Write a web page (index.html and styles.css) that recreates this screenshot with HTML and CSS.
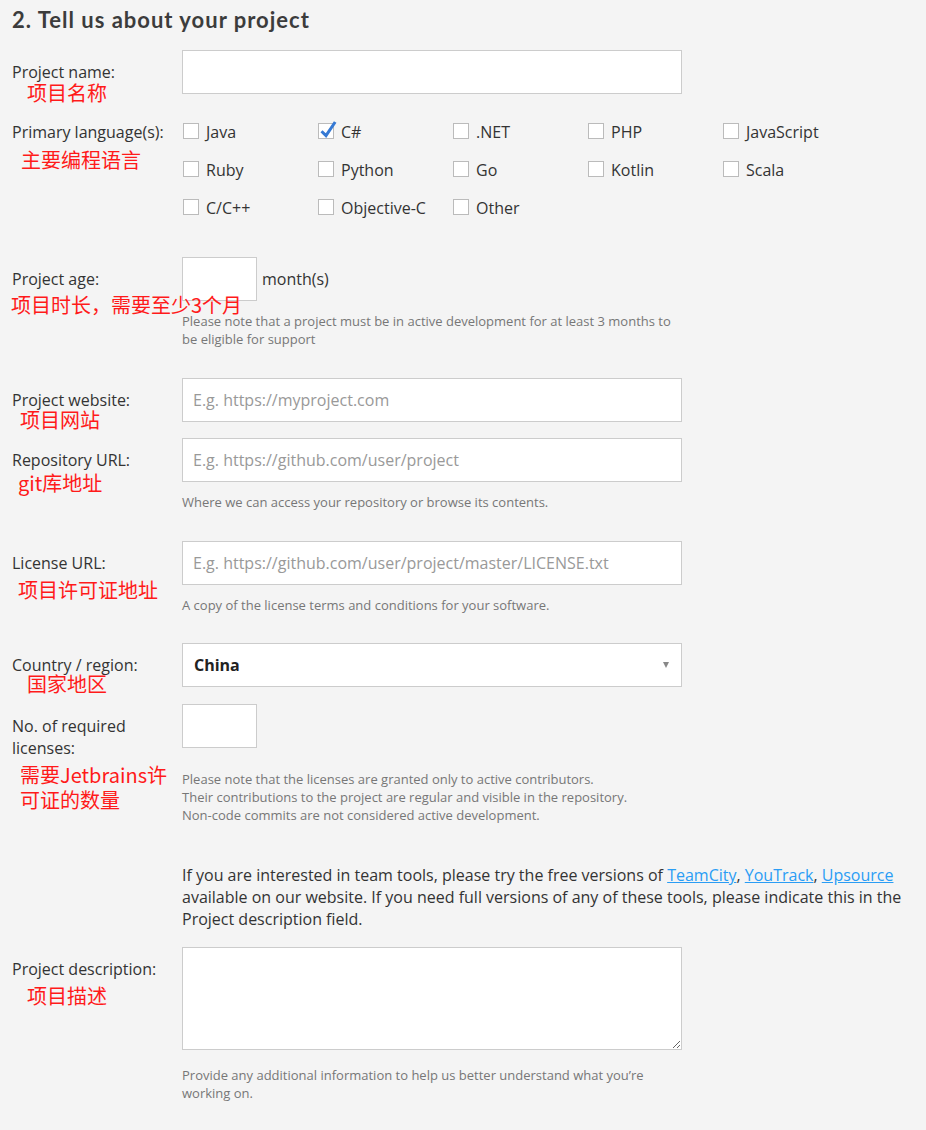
FILE: index.html
```html
<!DOCTYPE html>
<html lang="en">
<head>
  <meta charset="UTF-8">
  <meta name="viewport" content="width=device-width, initial-scale=1.0">
  <title>Tell us about your project</title>
  <link rel="stylesheet" href="styles.css">
</head>
<body>
  <form class="form">
    <h2 class="form-title">2. Tell us about your project</h2>

    <!-- Nombre -->
    <div class="row">
      <div class="label">Project name:<span class="cn cn-name">项目名称</span></div>
      <div class="field"><input class="text-input" type="text"></div>
    </div>

    <!-- Lenguajes -->
    <div class="row">
      <div class="label">Primary language(s):<span class="cn cn-lang">主要编程语言</span></div>
      <div class="field langs">
        <label class="check"><span class="box"></span>Java</label>
        <label class="check"><span class="box checked"><svg class="tick" width="20" height="18" viewBox="0 0 20 18"><path d="M3.5 11.2 L8 15.6 L17.2 2" fill="none" stroke="#3579d4" stroke-width="3"/></svg></span>C#</label>
        <label class="check"><span class="box"></span>.NET</label>
        <label class="check"><span class="box"></span>PHP</label>
        <label class="check"><span class="box"></span>JavaScript</label>
        <label class="check"><span class="box"></span>Ruby</label>
        <label class="check"><span class="box"></span>Python</label>
        <label class="check"><span class="box"></span>Go</label>
        <label class="check"><span class="box"></span>Kotlin</label>
        <label class="check"><span class="box"></span>Scala</label>
        <label class="check"><span class="box"></span>C/C++</label>
        <label class="check"><span class="box"></span>Objective-C</label>
        <label class="check"><span class="box"></span>Other</label>
      </div>
    </div>

    <!-- Edad -->
    <div class="row row-lg">
      <div class="label">Project age:<span class="cn cn-age">项目时长，需要至少3个月</span></div>
      <div class="field">
        <div class="inline-field"><input class="text-input small" type="text"><span>month(s)</span></div>
        <p class="hint">Please note that a project must be in active development for at least 3 months to be eligible for support</p>
      </div>
    </div>

    <!-- Web -->
    <div class="row row-md">
      <div class="label">Project website:<span class="cn cn-web">项目网站</span></div>
      <div class="field"><input class="text-input" type="text" placeholder="E.g. https://myproject.com"></div>
    </div>

    <div class="row">
      <div class="label">Repository URL:<span class="cn cn-repo">git库地址</span></div>
      <div class="field">
        <input class="text-input" type="text" placeholder="E.g. https://github.com/user/project">
        <p class="hint">Where we can access your repository or browse its contents.</p>
      </div>
    </div>

    <div class="row row-md">
      <div class="label">License URL:<span class="cn cn-license">项目许可证地址</span></div>
      <div class="field">
        <input class="text-input" type="text" placeholder="E.g. https://github.com/user/project/master/LICENSE.txt">
        <p class="hint">A copy of the license terms and conditions for your software.</p>
      </div>
    </div>

    <div class="row row-md row-country">
      <div class="label">Country / region:<span class="cn cn-country">国家地区</span></div>
      <div class="field">
        <div class="select"><span>China</span><span class="arrow"></span></div>
      </div>
    </div>

    <div class="row row-sm">
      <div class="label">No. of required licenses:<span class="cn cn-count">需要Jetbrains许<br>可证的数量</span></div>
      <div class="field">
        <input class="text-input small" type="text">
        <p class="hint hint-count">Please note that the licenses are granted only to active contributors.<br>Their contributions to the project are regular and visible in the repository.<br>Non-code commits are not considered active development.</p>
      </div>
    </div>

    <div class="row row-info">
      <div class="label"></div>
      <div class="field info">If you are interested in team tools, please try the free versions of <a href="#">TeamCity</a>, <a href="#">YouTrack</a>, <a href="#">Upsource</a> available on our website. If you need full versions of any of these tools, please indicate this in the Project description field.</div>
    </div>

    <div class="row row-sm">
      <div class="label">Project description:<span class="cn cn-desc">项目描述</span></div>
      <div class="field">
        <textarea class="textarea"></textarea>
        <p class="hint hint-desc">Provide any additional information to help us better understand what you’re working on.</p>
      </div>
    </div>
  </form>
</body>
</html>
```

FILE: styles.css
```css
body {
  margin: 0;
  padding: 0 12px;
  background-color: #f4f4f4;
  font-family: "Open Sans", Arial, sans-serif;
  color: #333;
}

.form-title {
  margin: 6px 0 0;
  font-family: Lato, "Open Sans", sans-serif;
  font-size: 22px;
  line-height: 28px;
  font-weight: 700;
  letter-spacing: 1px;
  color: #3c3c3c;
}

.row {
  display: grid;
  grid-template-columns: 170px 500px;
  align-items: start;
  margin-top: 16px;
}

.row.row-sm {
  margin-top: 17px;
}

.row.row-md {
  margin-top: 30px;
}

.row.row-country {
  margin-top: 29px;
}

.row.row-lg {
  margin-top: 38px;
}

.row.row-info {
  grid-template-columns: 170px 740px;
  margin-top: 40px;
}

.label {
  position: relative;
  padding: 11px 12px 0 0;
  font-size: 16px;
  line-height: 22px;
  color: #333;
}

/* Anotaciones en rojo */
.cn {
  position: absolute;
  white-space: nowrap;
  font-family: "Noto Sans CJK SC", sans-serif;
  font-size: 20px;
  line-height: 24px;
  color: #ff1a1a;
}

.cn-name { left: 15px; top: 31px; }
.cn-lang { left: 9px; top: 38px; }
.cn-age { left: -1px; top: 36px; }
.cn-web { left: 8px; top: 30px; }
.cn-repo { left: 6px; top: 33px; }
.cn-license { left: 6px; top: 37px; }
.cn-country { left: 15px; top: 29px; }
.cn-count { left: 8px; top: 58px; line-height: 25px; }
.cn-desc { left: 15px; top: 37px; }

.text-input {
  display: block;
  box-sizing: border-box;
  width: 500px;
  height: 44px;
  margin: 0;
  padding: 0 10px;
  border: 1px solid #ccc;
  border-radius: 0;
  background-color: #fff;
  font-family: "Open Sans", Arial, sans-serif;
  font-size: 16px;
  color: #333;
  outline: none;
}

.text-input::placeholder {
  color: #999;
}

.text-input.small {
  width: 75px;
}

.inline-field {
  display: flex;
  align-items: center;
  gap: 5px;
  font-size: 16px;
}

.langs {
  display: grid;
  grid-template-columns: repeat(5, 135px);
  row-gap: 16px;
  padding-top: 11px;
}

.check {
  display: flex;
  align-items: center;
  gap: 7px;
  font-size: 16px;
  line-height: 22px;
  color: #333;
}

.box {
  position: relative;
  flex: none;
  box-sizing: border-box;
  width: 16px;
  height: 16px;
  margin: -2px 0 0 1px;
  border: 1px solid #bbb;
  background-color: #fff;
}

.tick {
  position: absolute;
  left: -1px;
  top: -4px;
}

.hint {
  margin: 11px 0 0;
  font-size: 13px;
  line-height: 18px;
  color: #777;
}

.hint-count {
  margin-top: 22px;
}

.hint-desc {
  margin-top: 16px;
}

.select {
  display: flex;
  justify-content: space-between;
  align-items: center;
  box-sizing: border-box;
  width: 500px;
  height: 44px;
  padding: 0 12px 0 11px;
  border: 1px solid #ccc;
  background-color: #fff;
  font-size: 16px;
  font-weight: 700;
  color: #222;
}

.arrow {
  width: 0;
  height: 0;
  border-left: 3.5px solid transparent;
  border-right: 3.5px solid transparent;
  border-top: 6px solid #888;
}

.info {
  font-size: 16px;
  line-height: 22px;
  color: #333;
}

.info a {
  color: #2a9df4;
}

.textarea {
  display: block;
  box-sizing: border-box;
  width: 500px;
  height: 103px;
  margin: 0;
  border: 1px solid #ccc;
  border-radius: 0;
  background-color: #fff;
  font-family: "Open Sans", Arial, sans-serif;
  font-size: 16px;
}
```
